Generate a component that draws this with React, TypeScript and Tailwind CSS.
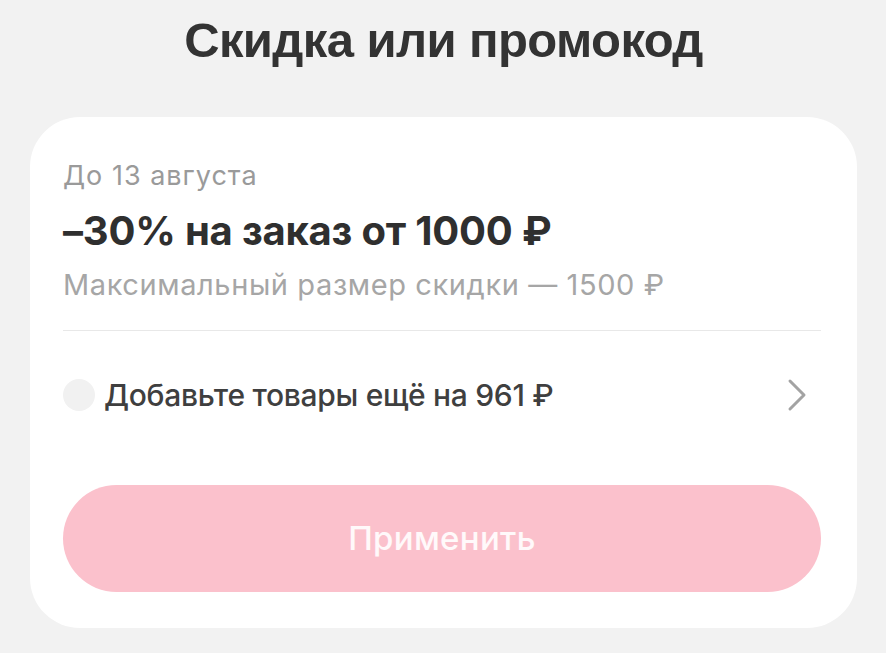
const titleFont = { fontFamily: '"Liberation Sans", Arial, sans-serif' }
const bodyFont = { fontFamily: 'Inter, "Liberation Sans", Arial, sans-serif' }

// Тонкая стрелка справа от строки условия
function Chevron() {
  return (
    <svg width="20" height="34" viewBox="0 0 20 34" fill="none" className="mr-[14px] shrink-0">
      <path d="M3 3 L17 17 L3 31" stroke="#a3a3a3" strokeWidth="3" strokeLinecap="round" strokeLinejoin="round" />
    </svg>
  )
}

export default function App() {
  return (
    <div className="min-h-screen w-full bg-[#f2f2f2] pl-[30px] pr-[29px] pt-[10px]">
      <h1
        className="text-center text-[49px] font-bold leading-[60px] tracking-[-0.6px] text-[#333333]"
        style={titleFont}
      >
        Скидка или промокод
      </h1>

      <div className="mt-[47px] rounded-[50px] bg-white pb-[36px] pl-[33px] pr-[36px] pt-[42px]" style={bodyFont}>
        <p className="text-[27px] leading-[34px] tracking-[1px] text-[#9a9a9a]">До 13 августа</p>
        <p className="mt-[16px] text-[40px] font-bold leading-[44px] tracking-[-0.2px] text-[#2f2f2f]">
          –30% на заказ от 1000 ₽
        </p>
        <p className="mt-[14px] text-[29px] leading-[36px] tracking-[0.6px] text-[#a6a6a6]">
          Максимальный размер скидки — 1500 ₽
        </p>

        <div className="mt-[27px] h-px w-full bg-[#e8e8e8]" />

        <div className="flex h-[128px] items-center">
          <div className="h-[32px] w-[32px] shrink-0 rounded-full bg-[#f1f1f1]" />
          <span className="ml-[9px] flex-1 text-[30px] font-medium tracking-[-0.3px] text-[#3f3f3f]">
            Добавьте товары ещё на 961 ₽
          </span>
          <Chevron />
        </div>

        <button className="mt-[26px] flex h-[107px] w-full items-center justify-center rounded-full bg-[#fbc1cc] text-[33px] font-medium tracking-[0.3px] text-white/90">
          Применить
        </button>
      </div>
    </div>
  )
}
